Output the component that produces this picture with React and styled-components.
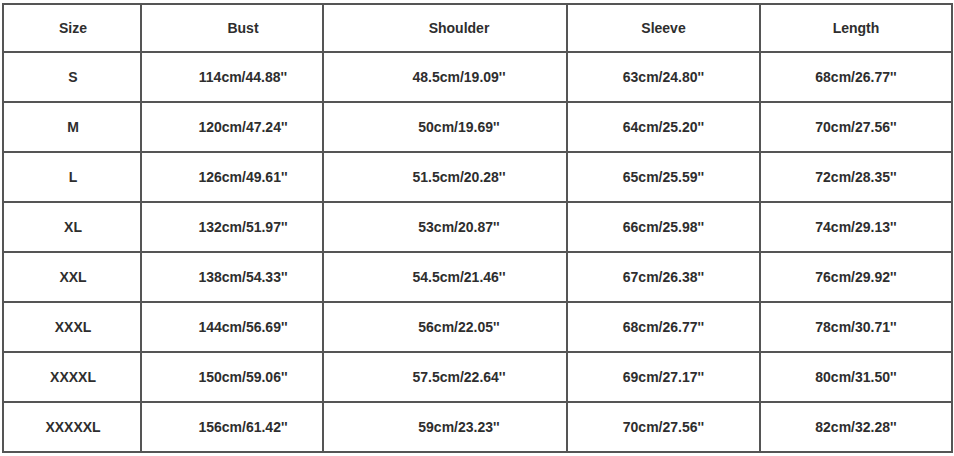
import React from "react";
import styled, { createGlobalStyle } from "styled-components";

const Global = createGlobalStyle`
  html, body { margin: 0; padding: 0; background: #fff; }
  body { font-family: "Liberation Sans", Arial, sans-serif; }
`;

const Page = styled.div`
  padding: 3px 0 0 2px;
`;

const Table = styled.table`
  border-collapse: collapse;
  table-layout: fixed;
  width: 949px;
  font-family: "Liberation Sans", Arial, sans-serif;
  font-size: 14px;
  font-weight: bold;
  color: #2e2e2e;
`;

const Col = styled.col`
  width: ${(p) => p.$w}px;
`;

const Cell = styled.td`
  border: 2px solid #555;
  height: ${(p) => (p.$head ? 46 : 48)}px;
  padding: 0 0 0 ${(p) => p.$shift || 0}px;
  text-align: center;
  vertical-align: middle;
  line-height: 16px;
`;

const HeadCell = styled(Cell).attrs({ as: "th" })`
  font-weight: bold;
`;

const headers = ["Size", "Bust", "Shoulder", "Sleeve", "Length"];
const rows = [
  ["S", "114cm/44.88''", "48.5cm/19.09''", "63cm/24.80''", "68cm/26.77''"],
  ["M", "120cm/47.24''", "50cm/19.69''", "64cm/25.20''", "70cm/27.56''"],
  ["L", "126cm/49.61''", "51.5cm/20.28''", "65cm/25.59''", "72cm/28.35''"],
  ["XL", "132cm/51.97''", "53cm/20.87''", "66cm/25.98''", "74cm/29.13''"],
  ["XXL", "138cm/54.33''", "54.5cm/21.46''", "67cm/26.38''", "76cm/29.92''"],
  ["XXXL", "144cm/56.69''", "56cm/22.05''", "68cm/26.77''", "78cm/30.71''"],
  ["XXXXL", "150cm/59.06''", "57.5cm/22.64''", "69cm/27.17''", "80cm/31.50''"],
  ["XXXXXL", "156cm/61.42''", "59cm/23.23''", "70cm/27.56''", "82cm/32.28''"],
];
const widths = [138, 182, 244, 193, 192];
const shifts = [2, 22, 28, 0, 0];

export default function App() {
  return (
    <>
      <Global />
      <Page>
        <Table>
          <colgroup>
            {widths.map((w, i) => (
              <Col key={i} $w={w} />
            ))}
          </colgroup>
          <thead>
            <tr>
              {headers.map((h, i) => (
                <HeadCell key={h} $head $shift={shifts[i]}>
                  {h}
                </HeadCell>
              ))}
            </tr>
          </thead>
          <tbody>
            {rows.map((r) => (
              <tr key={r[0]}>
                {r.map((c, i) => (
                  <Cell key={i} $shift={shifts[i]}>
                    {c}
                  </Cell>
                ))}
              </tr>
            ))}
          </tbody>
        </Table>
      </Page>
    </>
  );
}
